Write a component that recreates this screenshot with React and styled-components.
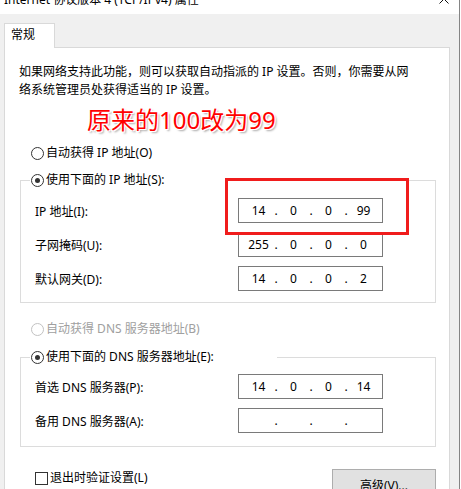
import React from "react";
import styled, { createGlobalStyle } from "styled-components";

const GlobalStyle = createGlobalStyle`
  html, body {
    margin: 0;
    padding: 0;
    background: #ffffff;
  }
  body {
    font-family: "Noto Sans", "Noto Sans CJK SC", sans-serif;
    font-size: 12px;
    color: #000;
  }
`;

const Window = styled.div`
  width: 459px;
  height: 489px;
  border-right: 1px solid #858585;
  display: flex;
  flex-direction: column;
  overflow: hidden;
  background: #f0f0f0;
`;

const TitleBar = styled.div`
  height: 14px;
  flex: none;
  background: #fff;
  display: flex;
  justify-content: space-between;
  align-items: flex-start;
  padding: 0 10px 0 4px;
  overflow: hidden;
`;

const Title = styled.span`
  line-height: 16px;
  margin-top: -8px;
  white-space: nowrap;
`;

const Close = styled.svg`
  margin-top: -6px;
  flex: none;
`;

const Body = styled.div`
  flex: 1;
  display: flex;
  flex-direction: column;
  padding: 9px 9px 0 4px;
`;

const Tab = styled.div`
  width: 51px;
  height: 25px;
  box-sizing: border-box;
  border: 1px solid #d9d9d9;
  border-bottom: none;
  background: #fff;
  margin-bottom: -1px;
  position: relative;
  z-index: 1;
  padding-left: 6px;
  line-height: 22px;
`;

const Panel = styled.div`
  flex: 1;
  background: #fff;
  border: 1px solid #d9d9d9;
  padding: 15px 13px 0 15px;
  display: flex;
  flex-direction: column;
`;

const Intro = styled.p`
  margin: 0 0 0 -1px;
  line-height: 18px;
  white-space: nowrap;
`;

const Note = styled.div`
  margin: 6px 0 0 67px;
  font-family: "Noto Sans", "Noto Sans CJK SC", sans-serif;
  font-size: 24px;
  line-height: 30px;
  color: #ff0000;
  text-shadow: -1px -1px 0 #fff, 1px -1px 0 #fff, -1px 1px 0 #fff,
    1px 1px 0 #fff, 2px 2px 2px rgba(0, 0, 0, 0.35);
`;

const Choice = styled.label`
  display: flex;
  align-items: center;
  gap: 2px;
  height: 16px;
  line-height: 16px;
  margin: ${(p) => p.$m || "0"};
  color: ${(p) => (p.$disabled ? "#a0a0a0" : "#000")};
  white-space: nowrap;
`;

const RadioDot = styled.span`
  width: 13px;
  height: 13px;
  box-sizing: border-box;
  border-radius: 50%;
  border: 1px solid ${(p) => (p.$disabled ? "#c2c2c2" : "#333")};
  background: #fff;
  display: flex;
  align-items: center;
  justify-content: center;
  flex: none;
  &::after {
    content: "";
    width: 5px;
    height: 5px;
    border-radius: 50%;
    background: #333;
    display: ${(p) => (p.$checked ? "block" : "none")};
  }
`;

const CheckBox = styled.span`
  width: 13px;
  height: 13px;
  box-sizing: border-box;
  border: 1px solid #333;
  background: #fff;
  flex: none;
`;

const Group = styled.div`
  position: relative;
  margin-top: ${(p) => p.$top}px;
`;

const Legend = styled(Choice)`
  width: 247px;
  box-sizing: border-box;
  margin-left: 10px;
  padding-left: 1px;
  background: #fff;
  position: relative;
  z-index: 1;
`;

const Frame = styled.div`
  margin-top: -8px;
  border: 1px solid #dcdcdc;
  padding: ${(p) => p.$pad};
  display: flex;
  flex-direction: column;
  gap: 9px;
`;

const Row = styled.div`
  display: flex;
  align-items: center;
  height: 25px;
`;

const RowLabel = styled.span`
  width: 203px;
  flex: none;
  white-space: nowrap;
`;

const IpBox = styled.div`
  width: 145px;
  height: 25px;
  box-sizing: border-box;
  border: 1px solid #7a7a7a;
  display: flex;
  align-items: center;
  padding-left: 5px;
  line-height: 16px;
`;

const Octet = styled.span`
  width: 29px;
  text-align: center;
`;

const Dot = styled.span`
  width: 6px;
  text-align: center;
`;

const Highlight = styled.div`
  position: absolute;
  left: 205px;
  top: 6px;
  width: 184px;
  height: 57px;
  box-sizing: border-box;
  border: 3px solid #f01c1c;
  z-index: 2;
`;

const Footer = styled.div`
  margin-top: 22px;
  display: flex;
  justify-content: space-between;
  align-items: flex-start;
  padding-left: 15px;
`;

const CheckRow = styled.label`
  display: flex;
  align-items: center;
  gap: 2px;
  margin-top: 1px;
  line-height: 16px;
`;

const Button = styled.button`
  width: 104px;
  height: 28px;
  box-sizing: border-box;
  background: #e1e1e1;
  border: 1px solid #adadad;
  font-family: inherit;
  font-size: 12px;
  color: #000;
  padding: 6px 0 0;
  line-height: 16px;
`;

const IpField = ({ value }) => {
  const parts = value ? value.split(".") : ["", "", "", ""];
  return (
    <IpBox>
      {parts.map((part, i) => (
        <React.Fragment key={i}>
          {i > 0 && <Dot>.</Dot>}
          <Octet>{part}</Octet>
        </React.Fragment>
      ))}
    </IpBox>
  );
};

const ipRows = [
  ["IP 地址(I):", "14.0.0.99"],
  ["子网掩码(U):", "255.0.0.0"],
  ["默认网关(D):", "14.0.0.2"],
];

const dnsRows = [
  ["首选 DNS 服务器(P):", "14.0.0.14"],
  ["备用 DNS 服务器(A):", ""],
];

export default function App() {
  return (
    <>
      <GlobalStyle />
      <Window>
        <TitleBar>
          <Title>Internet 协议版本 4 (TCP/IPv4) 属性</Title>
          <Close width="10" height="10" viewBox="0 0 10 10">
            <path d="M0.5 0.5L9.5 9.5M9.5 0.5L0.5 9.5" stroke="#111" strokeWidth="1" />
          </Close>
        </TitleBar>
        <Body>
          <Tab>常规</Tab>
          <Panel>
            <Intro>
              如果网络支持此功能，则可以获取自动指派的 IP 设置。否则，你需要从网
              <br />
              络系统管理员处获得适当的 IP 设置。
            </Intro>
            <Note>原来的100改为99</Note>

            <Choice $m="10px 0 0 11px">
              <RadioDot />
              自动获得 IP 地址(O)
            </Choice>

            <Group $top={11}>
              <Legend>
                <RadioDot $checked />
                使用下面的 IP 地址(S):
              </Legend>
              <Frame $pad="17px 0 11px 14px">
                {ipRows.map(([label, ip]) => (
                  <Row key={label}>
                    <RowLabel>{label}</RowLabel>
                    <IpField value={ip} />
                  </Row>
                ))}
              </Frame>
              <Highlight />
            </Group>

            <Choice $m="18px 0 0 11px" $disabled>
              <RadioDot $disabled />
              自动获得 DNS 服务器地址(B)
            </Choice>

            <Group $top={12}>
              <Legend>
                <RadioDot $checked />
                使用下面的 DNS 服务器地址(E):
              </Legend>
              <Frame $pad="16px 0 13px 14px">
                {dnsRows.map(([label, ip]) => (
                  <Row key={label}>
                    <RowLabel>{label}</RowLabel>
                    <IpField value={ip} />
                  </Row>
                ))}
              </Frame>
            </Group>

            <Footer>
              <CheckRow>
                <CheckBox />
                退出时验证设置(L)
              </CheckRow>
              <Button>高级(V)...</Button>
            </Footer>
          </Panel>
        </Body>
      </Window>
    </>
  );
}
